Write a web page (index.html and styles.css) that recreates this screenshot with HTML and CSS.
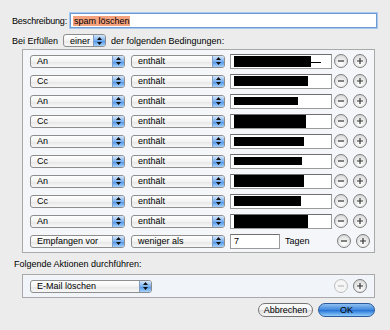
FILE: index.html
```html
<!DOCTYPE HTML>
<html>
<head>
  <meta charset="utf-8">
  <title>Regel</title>
  <link rel="stylesheet" href="styles.css">
</head>
<body>
<div class="dlg">

  <div class="desc">
    <label>Beschreibung:</label>
    <div class="field focus"><span class="sel">spam löschen</span></div>
  </div>

  <div class="match">
    <span>Bei Erfüllen</span>
    <div class="pop p-einer"><span>einer</span><i class="arr"><svg width="5" height="8" viewBox="0 0 5 8"><path d="M2.5 0L5 3H0Z M2.5 8L5 5H0Z"/></svg></i></div>
    <span>der folgenden Bedingungen:</span>
  </div>

  <!-- Bedingungen -->
  <div class="box conds">
    <div class="row">
      <div class="pop p1"><span>An</span><i class="arr"><svg width="5" height="8" viewBox="0 0 5 8"><path d="M2.5 0L5 3H0Z M2.5 8L5 5H0Z"/></svg></i></div>
      <div class="pop p2"><span>enthält</span><i class="arr"><svg width="5" height="8" viewBox="0 0 5 8"><path d="M2.5 0L5 3H0Z M2.5 8L5 5H0Z"/></svg></i></div>
      <div class="field txt"><b class="x" style="width:77px;height:11px"></b><b class="tail"></b></div>
      <span class="rnd rm"><svg width="14" height="14" viewBox="0 0 14 14"><path d="M4 7H10"/></svg></span>
      <span class="rnd add"><svg width="14" height="14" viewBox="0 0 14 14"><path d="M4 7H10M7 4V10"/></svg></span>
    </div>
    <div class="row">
      <div class="pop p1"><span>Cc</span><i class="arr"><svg width="5" height="8" viewBox="0 0 5 8"><path d="M2.5 0L5 3H0Z M2.5 8L5 5H0Z"/></svg></i></div>
      <div class="pop p2"><span>enthält</span><i class="arr"><svg width="5" height="8" viewBox="0 0 5 8"><path d="M2.5 0L5 3H0Z M2.5 8L5 5H0Z"/></svg></i></div>
      <div class="field txt"><b class="x" style="width:74px;height:10px"></b></div>
      <span class="rnd rm"><svg width="14" height="14" viewBox="0 0 14 14"><path d="M4 7H10"/></svg></span>
      <span class="rnd add"><svg width="14" height="14" viewBox="0 0 14 14"><path d="M4 7H10M7 4V10"/></svg></span>
    </div>
    <div class="row">
      <div class="pop p1"><span>An</span><i class="arr"><svg width="5" height="8" viewBox="0 0 5 8"><path d="M2.5 0L5 3H0Z M2.5 8L5 5H0Z"/></svg></i></div>
      <div class="pop p2"><span>enthält</span><i class="arr"><svg width="5" height="8" viewBox="0 0 5 8"><path d="M2.5 0L5 3H0Z M2.5 8L5 5H0Z"/></svg></i></div>
      <div class="field txt"><b class="x" style="width:64px;height:8px"></b></div>
      <span class="rnd rm"><svg width="14" height="14" viewBox="0 0 14 14"><path d="M4 7H10"/></svg></span>
      <span class="rnd add"><svg width="14" height="14" viewBox="0 0 14 14"><path d="M4 7H10M7 4V10"/></svg></span>
    </div>
    <div class="row">
      <div class="pop p1"><span>Cc</span><i class="arr"><svg width="5" height="8" viewBox="0 0 5 8"><path d="M2.5 0L5 3H0Z M2.5 8L5 5H0Z"/></svg></i></div>
      <div class="pop p2"><span>enthält</span><i class="arr"><svg width="5" height="8" viewBox="0 0 5 8"><path d="M2.5 0L5 3H0Z M2.5 8L5 5H0Z"/></svg></i></div>
      <div class="field txt"><b class="x" style="width:72px;height:13px"></b></div>
      <span class="rnd rm"><svg width="14" height="14" viewBox="0 0 14 14"><path d="M4 7H10"/></svg></span>
      <span class="rnd add"><svg width="14" height="14" viewBox="0 0 14 14"><path d="M4 7H10M7 4V10"/></svg></span>
    </div>
    <div class="row">
      <div class="pop p1"><span>An</span><i class="arr"><svg width="5" height="8" viewBox="0 0 5 8"><path d="M2.5 0L5 3H0Z M2.5 8L5 5H0Z"/></svg></i></div>
      <div class="pop p2"><span>enthält</span><i class="arr"><svg width="5" height="8" viewBox="0 0 5 8"><path d="M2.5 0L5 3H0Z M2.5 8L5 5H0Z"/></svg></i></div>
      <div class="field txt"><b class="x" style="width:70px;height:9px"></b></div>
      <span class="rnd rm"><svg width="14" height="14" viewBox="0 0 14 14"><path d="M4 7H10"/></svg></span>
      <span class="rnd add"><svg width="14" height="14" viewBox="0 0 14 14"><path d="M4 7H10M7 4V10"/></svg></span>
    </div>
    <div class="row">
      <div class="pop p1"><span>Cc</span><i class="arr"><svg width="5" height="8" viewBox="0 0 5 8"><path d="M2.5 0L5 3H0Z M2.5 8L5 5H0Z"/></svg></i></div>
      <div class="pop p2"><span>enthält</span><i class="arr"><svg width="5" height="8" viewBox="0 0 5 8"><path d="M2.5 0L5 3H0Z M2.5 8L5 5H0Z"/></svg></i></div>
      <div class="field txt"><b class="x" style="width:68px;height:8px"></b></div>
      <span class="rnd rm"><svg width="14" height="14" viewBox="0 0 14 14"><path d="M4 7H10"/></svg></span>
      <span class="rnd add"><svg width="14" height="14" viewBox="0 0 14 14"><path d="M4 7H10M7 4V10"/></svg></span>
    </div>
    <div class="row">
      <div class="pop p1"><span>An</span><i class="arr"><svg width="5" height="8" viewBox="0 0 5 8"><path d="M2.5 0L5 3H0Z M2.5 8L5 5H0Z"/></svg></i></div>
      <div class="pop p2"><span>enthält</span><i class="arr"><svg width="5" height="8" viewBox="0 0 5 8"><path d="M2.5 0L5 3H0Z M2.5 8L5 5H0Z"/></svg></i></div>
      <div class="field txt"><b class="x" style="width:70px;height:12px"></b></div>
      <span class="rnd rm"><svg width="14" height="14" viewBox="0 0 14 14"><path d="M4 7H10"/></svg></span>
      <span class="rnd add"><svg width="14" height="14" viewBox="0 0 14 14"><path d="M4 7H10M7 4V10"/></svg></span>
    </div>
    <div class="row">
      <div class="pop p1"><span>Cc</span><i class="arr"><svg width="5" height="8" viewBox="0 0 5 8"><path d="M2.5 0L5 3H0Z M2.5 8L5 5H0Z"/></svg></i></div>
      <div class="pop p2"><span>enthält</span><i class="arr"><svg width="5" height="8" viewBox="0 0 5 8"><path d="M2.5 0L5 3H0Z M2.5 8L5 5H0Z"/></svg></i></div>
      <div class="field txt"><b class="x" style="width:67px;height:10px"></b></div>
      <span class="rnd rm"><svg width="14" height="14" viewBox="0 0 14 14"><path d="M4 7H10"/></svg></span>
      <span class="rnd add"><svg width="14" height="14" viewBox="0 0 14 14"><path d="M4 7H10M7 4V10"/></svg></span>
    </div>
    <div class="row">
      <div class="pop p1"><span>An</span><i class="arr"><svg width="5" height="8" viewBox="0 0 5 8"><path d="M2.5 0L5 3H0Z M2.5 8L5 5H0Z"/></svg></i></div>
      <div class="pop p2"><span>enthält</span><i class="arr"><svg width="5" height="8" viewBox="0 0 5 8"><path d="M2.5 0L5 3H0Z M2.5 8L5 5H0Z"/></svg></i></div>
      <div class="field txt"><b class="x" style="width:74px;height:13px"></b></div>
      <span class="rnd rm"><svg width="14" height="14" viewBox="0 0 14 14"><path d="M4 7H10"/></svg></span>
      <span class="rnd add"><svg width="14" height="14" viewBox="0 0 14 14"><path d="M4 7H10M7 4V10"/></svg></span>
    </div>
    <div class="row">
      <div class="pop p1"><span>Empfangen vor</span><i class="arr"><svg width="5" height="8" viewBox="0 0 5 8"><path d="M2.5 0L5 3H0Z M2.5 8L5 5H0Z"/></svg></i></div>
      <div class="pop p2"><span>weniger als</span><i class="arr"><svg width="5" height="8" viewBox="0 0 5 8"><path d="M2.5 0L5 3H0Z M2.5 8L5 5H0Z"/></svg></i></div>
      <div class="field days">7</div>
      <span class="unit">Tagen</span>
      <span class="rnd rm"><svg width="14" height="14" viewBox="0 0 14 14"><path d="M4 7H10"/></svg></span>
      <span class="rnd add"><svg width="14" height="14" viewBox="0 0 14 14"><path d="M4 7H10M7 4V10"/></svg></span>
    </div>
  </div>

  <div class="lbl">Folgende Aktionen durchführen:</div>

  <!-- Aktionen -->
  <div class="box acts">
    <div class="row">
      <div class="pop pa"><span>E-Mail löschen</span><i class="arr"><svg width="5" height="8" viewBox="0 0 5 8"><path d="M2.5 0L5 3H0Z M2.5 8L5 5H0Z"/></svg></i></div>
      <span class="rnd rm off"><svg width="14" height="14" viewBox="0 0 14 14"><path d="M4 7H10"/></svg></span>
      <span class="rnd add"><svg width="14" height="14" viewBox="0 0 14 14"><path d="M4 7H10M7 4V10"/></svg></span>
    </div>
  </div>

  <div class="btns">
    <button class="btn">Abbrechen</button>
    <button class="btn ok">OK</button>
  </div>

</div>
</body>
</html>
```

FILE: styles.css
```css
body {
  margin: 0;
  background: #ececec;
  font: 9px "Liberation Sans", Arial, sans-serif;
  color: #000;
}

.dlg {
  width: 390px;
  height: 330px;
  box-sizing: border-box;
  padding: 13px 13px 0 12px;
}

.desc {
  display: flex;
  align-items: center;
  height: 15px;
}

.desc label {
  flex: none;
  margin-right: 3px;
  letter-spacing: -0.2px;
}

.field {
  display: flex;
  align-items: center;
  box-sizing: border-box;
  border: 1px solid #9a9a9a;
  border-top-color: #6f6f6f;
  background: #fff;
}

.desc .field {
  flex: 1;
  height: 15px;
  padding: 0 2px;
}

.focus {
  border-color: #6e9ad4;
  box-shadow: 0 0 0 1px #a8c8ee;
}

.sel {
  background: #f7a27e;
  padding: 0 1px;
}

.match {
  display: flex;
  align-items: center;
  height: 13px;
  margin-top: 6px;
}

.match .pop {
  margin: 0 5px 0 5px;
}

/* popup menus */
.pop {
  display: flex;
  align-items: center;
  height: 13px;
  box-sizing: border-box;
  border: 1px solid #8d8d8d;
  border-radius: 3px;
  background: linear-gradient(#ffffff, #f3f3f3 50%, #e6e6e6 51%, #f8f8f8);
  overflow: hidden;
}

.pop span {
  flex: 1;
  padding-left: 6px;
  white-space: nowrap;
}

.pop .arr {
  display: flex;
  align-items: center;
  justify-content: center;
  width: 11px;
  height: 100%;
  border-left: 1px solid #7f9cc4;
  background: linear-gradient(#d3e6fb, #79afef 50%, #4a90e6 51%, #a7d2fb);
}

.pop .arr path {
  fill: #111;
}

.p-einer { width: 43px; }
.p1 { width: 95px; }
.p2 { width: 94px; margin-left: 6px; }
.pa { width: 122px; }

.box {
  margin: 0 2px 0 10px;
  border: 1px solid #a9a9a9;
  background: #f4f6fa;
}

.conds {
  margin-top: 2px;
  padding: 1px 0;
}

.row {
  display: flex;
  align-items: center;
  height: 20px;
  padding-left: 7px;
}

.txt {
  width: 102px;
  height: 15px;
  margin-left: 5px;
  padding-left: 3px;
}

.x {
  display: block;
  background: #000;
}

.tail {
  display: block;
  width: 10px;
  height: 1px;
  margin-top: 2px;
  background: #000;
}

.days {
  width: 50px;
  height: 15px;
  margin-left: 5px;
  padding-left: 3px;
}

.unit {
  width: 50px;
  padding-left: 5px;
}

/* round minus / plus buttons */
.rnd {
  display: block;
  width: 14px;
  height: 14px;
  box-sizing: border-box;
  border: 1px solid #7d7d7d;
  border-radius: 50%;
  background: radial-gradient(circle at 50% 70%, #ffffff, #e4e4e4 60%, #c9c9c9);
}

.rnd svg {
  display: block;
  margin: -1px;
}

.rnd path {
  stroke: #333;
  stroke-width: 1.2;
  fill: none;
}

.rm { margin-left: 2px; }
.add { margin-left: 5px; }

.rnd.off {
  border-color: #bdbdbd;
  background: #f5f5f5;
}

.rnd.off path {
  stroke: #bbb;
}

.lbl {
  margin: 5px 0 0 2px;
  line-height: 12px;
}

.acts {
  margin-top: 4px;
  background: #f1f5fa;
}

.acts .row {
  height: 22px;
}

.acts .rm {
  margin-left: auto;
}

.acts .add {
  margin-right: 7px;
}

.btns {
  display: flex;
  justify-content: flex-end;
  gap: 5px;
  margin: 5px 2px 0 0;
}

.btn {
  height: 14px;
  padding: 0;
  border: 1px solid #757575;
  border-radius: 7px;
  background: linear-gradient(#ffffff, #f1f1f1 50%, #dedede 51%, #f9f9f9);
  font: 9px "Liberation Sans", Arial, sans-serif;
  color: #000;
  width: 55px;
}

.btn.ok {
  width: 57px;
  border-color: #2b5b9c;
  background: linear-gradient(#8fc0f2, #3d86dc 50%, #2270d4 51%, #93cffc);
}
```
